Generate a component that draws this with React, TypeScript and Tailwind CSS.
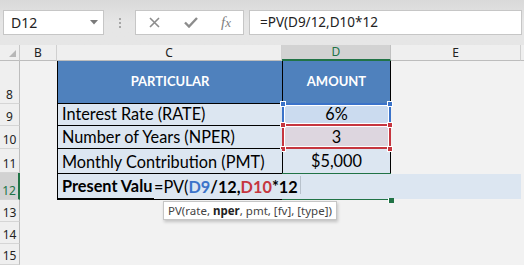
import React from "react";

function RowHead({ n, active }: { n: string; active?: boolean }) {
  return (
    <div
      className={
        "w-[20px] shrink-0 flex items-end justify-center pb-[2px] text-[12px] leading-none font-['Noto_Sans',sans-serif] border-b border-b-[#d5d5d5] " +
        (active
          ? "bg-[#d2d2d2] text-[#217346] border-r-2 border-r-[#217346]"
          : "bg-[#efefef] text-[#222] border-r border-r-[#bdbdbd]")
      }
    >
      {n}
    </div>
  );
}

function Gray({ w }: { w: string }) {
  return <div className={w + " shrink-0 bg-[#f2f2f2]"} />;
}

export default function App() {
  const cell = "font-['Lato',sans-serif] text-[16.3px] text-black leading-none";
  return (
    <div className="relative w-[524px] h-[265px] overflow-hidden bg-[#f2f2f2] select-none">
      {/* Formula bar */}
      <div className="h-[45px] bg-gradient-to-b from-[#d9d9d9] via-[#e6e6e6] to-[#e6e6e6] flex items-start pt-[10px] pl-[3px] gap-0">
        <div className="w-[101px] h-[25px] bg-white border border-[#c6c6c6] flex items-center justify-between pl-[7px] pr-[5px] font-['Noto_Sans',sans-serif] text-[14px] text-[#222]">
          <span>D12</span>
          <svg width="8" height="5" viewBox="0 0 8 5">
            <path d="M0 0 L8 0 L4 4.5 Z" fill="#7a7a7a" />
          </svg>
        </div>
        <div className="w-[31px] h-[25px] flex flex-col items-center justify-center gap-[2px]">
          <div className="w-[2px] h-[2px] bg-[#a6a6a6]" />
          <div className="w-[2px] h-[2px] bg-[#a6a6a6]" />
          <div className="w-[2px] h-[2px] bg-[#a6a6a6]" />
        </div>
        <div className="w-[109px] h-[25px] bg-white border border-[#c6c6c6] flex items-center">
          <svg className="ml-[13px]" width="11" height="11" viewBox="0 0 11 11">
            <path d="M1 1 L10 10 M10 1 L1 10" stroke="#8c8c8c" strokeWidth="1.6" />
          </svg>
          <svg className="ml-[24px]" width="14" height="11" viewBox="0 0 14 11">
            <path d="M1 5.5 L5 9.5 L13 1" stroke="#8c8c8c" strokeWidth="2.4" fill="none" />
          </svg>
          <span className="ml-[23px] font-['Liberation_Serif',serif] italic text-[15px] leading-none text-[#7f7f7f]">
            f<span className="text-[13px]">x</span>
          </span>
        </div>
        <div className="ml-[5px] w-[273px] h-[25px] bg-white border border-[#c6c6c6] flex items-center pl-[10px] font-['Noto_Sans',sans-serif] text-[13.5px] text-[#222]">
          =PV(D9/12,D10*12
        </div>
      </div>

      {/* Column headers */}
      <div className="h-[16px] flex font-['Noto_Sans',sans-serif] text-[12px] leading-none text-[#222]">
        <div className="w-[20px] shrink-0 bg-[#efefef] border-r border-[#c8c8c8] border-b border-b-[#bdbdbd] relative">
          <svg className="absolute right-[3px] bottom-[3px]" width="7" height="7" viewBox="0 0 7 7">
            <path d="M7 0 L7 7 L0 7 Z" fill="#b7b7b7" />
          </svg>
        </div>
        <div className="w-[37px] shrink-0 bg-[#efefef] border-r border-[#d0d0d0] border-b border-b-[#bdbdbd] flex items-center justify-center">B</div>
        <div className="w-[225px] shrink-0 bg-[#efefef] border-r border-[#d0d0d0] border-b border-b-[#bdbdbd] flex items-center justify-center">C</div>
        <div className="w-[109px] shrink-0 bg-[#d2d2d2] border-r border-[#c0c0c0] border-b-2 border-b-[#217346] text-[#217346] flex items-center justify-center">D</div>
        <div className="w-[130px] shrink-0 bg-[#efefef] border-r border-[#d0d0d0] border-b border-b-[#bdbdbd] flex items-center justify-center">E</div>
        <div className="flex-1 bg-[#efefef] border-b border-b-[#bdbdbd]" />
      </div>

      {/* Row 8 */}
      <div className="h-[43px] flex">
        <RowHead n="8" />
        <Gray w="w-[37px]" />
        <div className="w-[225px] shrink-0 bg-[#4f81bd] border-l border-b border-black flex items-center justify-center font-['Lato',sans-serif] font-bold text-[13px] text-white">
          PARTICULAR
        </div>
        <div className="w-[109px] shrink-0 bg-[#4f81bd] border-l border-r border-b border-black flex items-center justify-center font-['Lato',sans-serif] font-bold text-[13px] text-white">
          AMOUNT
        </div>
        <div className="flex-1 bg-[#f2f2f2]" />
      </div>

      {/* Row 9 */}
      <div className="h-[22px] flex">
        <RowHead n="9" />
        <Gray w="w-[37px]" />
        <div className={"w-[225px] shrink-0 bg-[#dce6f1] border-l border-b border-black flex items-end pb-[3px] pl-[4px] " + cell}>
          Interest Rate (RATE)
        </div>
        <div className={"w-[109px] shrink-0 bg-[#cbdbef] border-l border-r border-b border-black flex items-end pb-[3px] justify-center " + cell}>
          6%
        </div>
        <div className="flex-1" />
      </div>

      {/* Row 10 */}
      <div className="h-[23px] flex">
        <RowHead n="10" />
        <Gray w="w-[37px]" />
        <div className={"w-[225px] shrink-0 bg-[#dce6f1] border-l border-b border-black flex items-end pb-[3px] pl-[4px] " + cell}>
          Number of Years (NPER)
        </div>
        <div className={"w-[109px] shrink-0 bg-[#ddd6df] border-l border-r border-b border-black flex items-end pb-[3px] justify-center " + cell}>
          3
        </div>
        <div className="flex-1" />
      </div>

      {/* Row 11 */}
      <div className="h-[24px] flex">
        <RowHead n="11" />
        <Gray w="w-[37px]" />
        <div className={"w-[225px] shrink-0 bg-[#dce6f1] border-l border-black flex items-end pb-[3px] pl-[4px] whitespace-nowrap overflow-visible relative z-10 " + cell}>
          Monthly Contribution (PMT)
        </div>
        <div className={"w-[109px] shrink-0 bg-[#dce6f1] border-l border-r border-black flex items-end pb-[4px] justify-center " + cell}>
          $5,000
        </div>
        <div className="flex-1" />
      </div>

      {/* Row 12 */}
      <div className="h-[27px] flex">
        <RowHead n="12" active />
        <Gray w="w-[37px]" />
        <div className={"w-[225px] shrink-0 bg-[#dce6f1] border-l border-t border-black border-b-2 flex items-end pb-[4px] pl-[4px] font-bold whitespace-nowrap " + cell}>
          Present Valu
        </div>
        <div className="w-[109px] shrink-0 bg-[#dce6f1] border-t-2 border-b-2 border-[#217346]" />
        <div className="flex-1" />
      </div>

      {/* Rows 13-15 */}
      <div className="h-[22px] flex">
        <RowHead n="13" />
        <div className="flex-1" />
      </div>
      <div className="h-[22px] flex">
        <RowHead n="14" />
        <div className="flex-1" />
      </div>
      <div className="h-[21px] flex">
        <RowHead n="15" />
        <div className="flex-1" />
      </div>

      {/* Reference highlight D9 (blue) */}
      <div className="absolute left-[282px] top-[103px] w-[109px] h-[23px] border-2 border-[#3b73c9]">
        <div className="absolute inset-0 border border-white" />
      </div>
      {/* Reference highlight D10 (red) */}
      <div className="absolute left-[282px] top-[124px] w-[109px] h-[25px] border-2 border-[#c6363f]">
        <div className="absolute inset-0 border border-white" />
      </div>
      {/* corner squares */}
      <div className="absolute left-[280px] top-[101px] w-[6px] h-[6px] bg-[#3b73c9] border border-white" />
      <div className="absolute left-[387px] top-[101px] w-[6px] h-[6px] bg-[#3b73c9] border border-white" />
      <div className="absolute left-[280px] top-[122px] w-[6px] h-[6px] bg-[#c6363f] border border-white" />
      <div className="absolute left-[387px] top-[122px] w-[6px] h-[6px] bg-[#c6363f] border border-white" />
      <div className="absolute left-[280px] top-[146px] w-[6px] h-[6px] bg-[#c6363f] border border-white" />
      <div className="absolute left-[387px] top-[146px] w-[6px] h-[6px] bg-[#c6363f] border border-white" />

      {/* In-cell editor */}
      <div className="absolute left-[154px] top-[174px] w-[367px] h-[25px] bg-[#dce6f1] flex items-end pb-[4px] whitespace-nowrap font-['Lato',sans-serif] text-[16.3px] leading-none text-black">
        <span>=PV(</span>
        <span className="font-bold text-[#3b73c9]">D9</span>
        <span className="font-bold">/12,</span>
        <span className="font-bold text-[#c6363f]">D10</span>
        <span className="font-bold">*12</span>
        <span className="ml-[2px] w-px h-[18px] bg-[#b8c2cc] self-center" />
      </div>

      {/* Fill handle */}
      <div className="absolute left-[388px] top-[198px] w-[6px] h-[5px] bg-[#217346] border-l border-white" />

      {/* Tooltip */}
      <div className="absolute left-[163px] top-[201px] h-[19px] px-[4px] bg-white border border-[#c6c6c6] shadow-[1px_2px_3px_rgba(0,0,0,0.2)] flex items-center font-['Noto_Sans',sans-serif] text-[11.5px] text-[#444] whitespace-pre">
        <span>PV(rate, </span>
        <span className="font-bold text-[#222]">nper</span>
        <span>, pmt, [fv], [type])</span>
      </div>
    </div>
  );
}
